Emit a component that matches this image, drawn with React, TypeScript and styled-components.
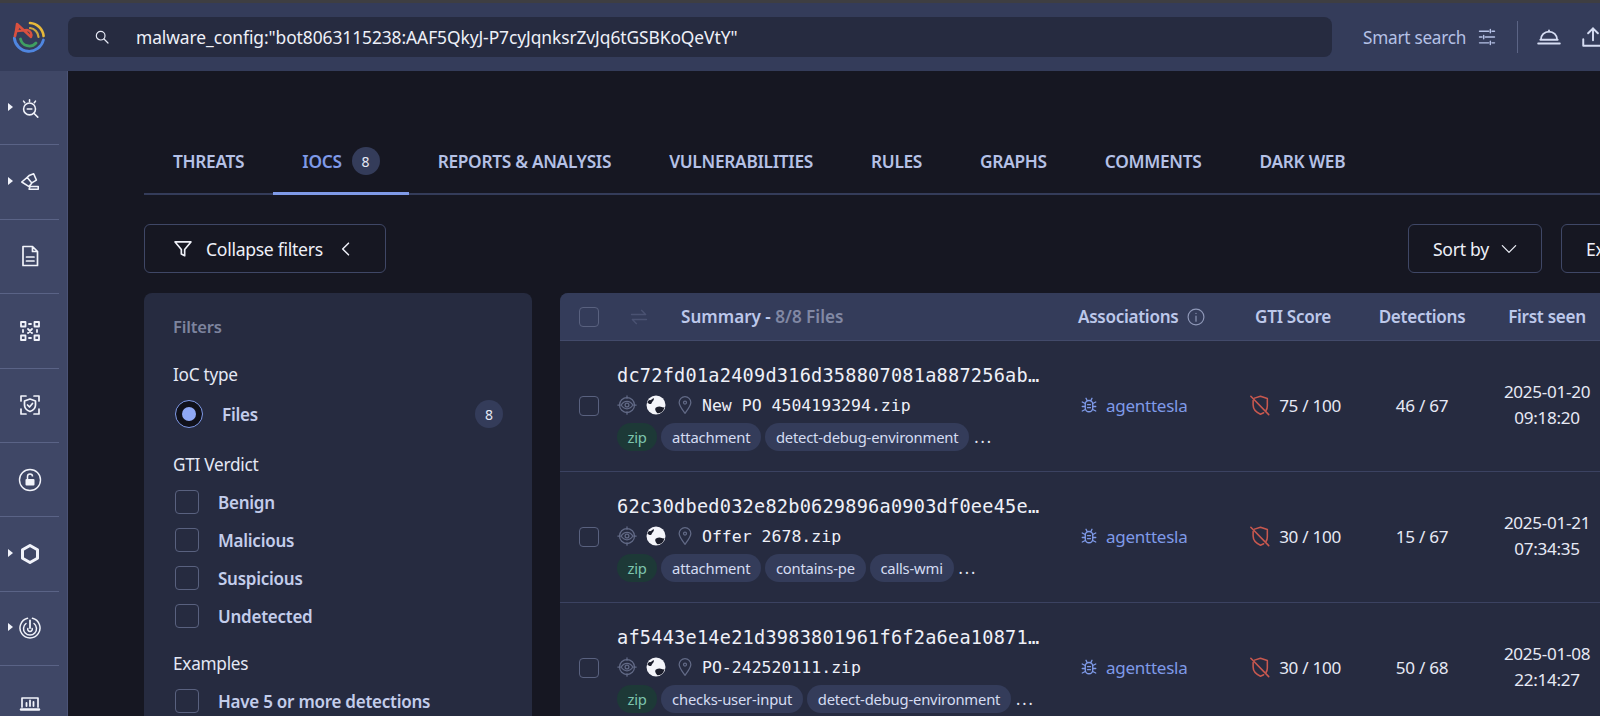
import React from "react";
import styled, { createGlobalStyle } from "styled-components";

const Global = createGlobalStyle`
  html, body { margin: 0; padding: 0; background: #161722; height: 100%; overflow: hidden; }
  #root { height: 100%; }
  * { box-sizing: border-box; }
`;

const SANS = `"Noto Sans", "Open Sans", sans-serif`;
const MONO = `"DejaVu Sans Mono", "Liberation Mono", monospace`;

const Page = styled.div`
  width: 1600px; height: 716px; overflow: hidden; display: flex; flex-direction: column;
  background: #161722; font-family: ${SANS}; color: #e6e9f5;
`;
const TopStrip = styled.div` height: 3px; background: #3e3e42; flex: none; `;
const Header = styled.header`
  height: 68px; flex: none; display: flex; align-items: center; background: #343c5a; overflow: hidden;
`;
const LogoCell = styled.div` width: 68px; flex: none; display: flex; justify-content: center; padding-right: 10px; `;
const SearchBox = styled.div`
  width: 1264px; flex: none; height: 40px; border-radius: 8px; background: #262b40;
  display: flex; align-items: center; padding-left: 26px; gap: 26px;
`;
const SearchText = styled.span` font-size: 17.4px; color: #eef0f8; white-space: nowrap; letter-spacing: -0.08px; `;
const SmartSearch = styled.span`
  margin-left: 31px; font-size: 17.2px; color: #b5c1e6; white-space: nowrap; letter-spacing: -0.25px; flex: none;
`;
const HeaderIcons = styled.div` display: flex; align-items: center; flex: none; margin-left: 11px; gap: 18px; `;
const VRule = styled.div` width: 1px; height: 32px; background: #5b6485; margin-left: 2px; `;

const Body = styled.div` flex: 1; display: flex; min-height: 0; `;
const Sidebar = styled.nav`
  width: 68px; flex: none; background: #3f4766; border-right: 1px solid #4b5376;
  display: flex; flex-direction: column; overflow: hidden;
`;
const SideRow = styled.div<{ $last?: boolean }>`
  height: 74.4px; flex: none; width: 59px; display: flex; align-items: center; justify-content: center;
  position: relative;
  border-bottom: ${(p) => (p.$last ? "none" : "1px solid #5a6386")};
`;
const SideCaret = styled.span`
  position: absolute; left: 8px; top: 50%; margin-top: -5px; width: 0; height: 0;
  border-left: 5px solid #f1f3fa; border-top: 4.5px solid transparent; border-bottom: 4.5px solid transparent;
`;

const Main = styled.main` flex: 1; min-width: 0; overflow: hidden; padding: 74px 0 0 76px; `;
const Content = styled.div` width: 1547px; `;

const Tabs = styled.div`
  display: flex; height: 50px; border-bottom: 2px solid #343c5a;
`;
const Tab = styled.div<{ $active?: boolean }>`
  height: 50px; padding: 0 29px 15px; display: flex; align-items: center; gap: 10px; flex: none;
  font-size: 17.3px; font-weight: 600; letter-spacing: -0.3px;
  color: ${(p) => (p.$active ? "#7f9ae8" : "#b5c1e6")};
  border-bottom: ${(p) => (p.$active ? "3px solid #7f9ae8" : "3px solid transparent")};
`;
const Count = styled.span`
  width: 28px; height: 28px; border-radius: 50%; background: #343c5a; color: #e6e9f5;
  display: inline-flex; align-items: center; justify-content: center; font-size: 14px; font-weight: 400; letter-spacing: 0;
`;

const Toolbar = styled.div`
  margin-top: 29px; display: flex; align-items: center; gap: 19px;
`;
const OutlineButton = styled.div<{ $push?: boolean }>`
  height: 49px; border: 1px solid #3f4766; border-radius: 6px; display: flex; align-items: center; flex: none;
  padding: 0 24px; font-size: 17.6px; color: #eef0f8; letter-spacing: -0.3px; white-space: nowrap;
  margin-left: ${(p) => (p.$push ? "auto" : "0")};
`;
const CollapseButton = styled(OutlineButton)` width: 242px; padding: 0 0 0 28px; gap: 13px; `;
const SortButton = styled(OutlineButton)` width: 134px; gap: 10px; `;
const ExportButton = styled(OutlineButton)` width: 130px; `;

const Columns = styled.div` margin-top: 20px; display: flex; gap: 28px; align-items: flex-start; `;
const FilterPanel = styled.aside`
  width: 388px; flex: none; height: 500px; background: #262b40; border-radius: 8px 8px 0 0; padding: 22px 29px 0 29px;
`;
const PanelTitle = styled.div` font-size: 16.6px; font-weight: 600; color: #7d849e; line-height: 24px; letter-spacing: -0.2px; `;
const GroupTitle = styled.div<{ $top: number }>`
  font-size: 17.2px; color: #e4e8f5; line-height: 24px; margin-top: ${(p) => p.$top}px; letter-spacing: -0.25px;
`;
const RadioRow = styled.div`
  display: flex; align-items: center; height: 28px; margin-top: 13px; padding-left: 2px;
`;
const Radio = styled.span`
  width: 28px; height: 28px; border-radius: 50%; border: 1px solid #7f9ae8; background: #10111b; flex: none;
  display: flex; align-items: center; justify-content: center;
  &::after { content: ""; width: 14px; height: 14px; border-radius: 50%; background: #8fa8f5; }
`;
const RowLabel = styled.span<{ $gap: number }>`
  margin-left: ${(p) => p.$gap}px; font-size: 17px; font-weight: 600; color: #c3cdeb; letter-spacing: -0.25px; white-space: nowrap;
`;
const PanelCount = styled(Count)` margin-left: auto; font-size: 14px; `;
const CheckRow = styled.div<{ $top: number }>`
  display: flex; align-items: center; height: 24px; margin-top: ${(p) => p.$top}px; padding-left: 2px;
`;
const Check = styled.span<{ $size?: number }>`
  width: ${(p) => p.$size ?? 24}px; height: ${(p) => p.$size ?? 24}px; flex: none;
  border: 1px solid #59617f; border-radius: 4px;
`;

const Table = styled.section` flex: 1; min-width: 0; background: #262b40; border-radius: 8px 8px 0 0; `;
const GRID = "58px 460px 154px 122px 136px 114px 1fr";
const THead = styled.div`
  height: 48px; display: grid; grid-template-columns: ${GRID}; align-items: center; background: #343c5a;
  border-radius: 8px 8px 0 0; border-bottom: 1px solid #424a6a;
  font-size: 17.1px; font-weight: 600; color: #bdc8ea; letter-spacing: -0.3px;
`;
const CheckCell = styled.div` display: flex; justify-content: flex-start; padding-left: 19px; `;
const SummaryHead = styled.div` display: flex; align-items: center; padding-left: 11px; `;
const Dim = styled.span` color: #8188a4; `;
const HeadSummaryText = styled.span` margin-left: 32px; white-space: nowrap; letter-spacing: 0; `;
const Center = styled.div` white-space: nowrap; display: flex; justify-content: center; align-items: center; `;
const AssocHead = styled.div` display: flex; align-items: center; gap: 8px; white-space: nowrap; `;

const Row = styled.div`
  height: 131px; display: grid; grid-template-columns: ${GRID}; align-items: center;
  border-bottom: 1px solid #3b4261;
`;
const Summary = styled.div` display: flex; flex-direction: column; padding-top: 2px; margin-left: -1px; `;
const Hash = styled.div` font-family: ${MONO}; font-size: 18.6px; line-height: 26px; color: #eef0f8; white-space: nowrap; letter-spacing: 0.22px; `;
const NameLine = styled.div` display: flex; align-items: center; height: 26px; margin-top: 3px; `;
const FileName = styled.span` font-family: ${MONO}; font-size: 16.5px; color: #eef0f8; white-space: nowrap; margin-left: 7px; `;
const TagLine = styled.div` display: flex; align-items: center; gap: 4px; margin-top: 5px; `;
const Tag = styled.span<{ $green?: boolean }>`
  height: 28px; padding: 0 ${(p) => (p.$green ? 10.5 : 10.8)}px; border-radius: 14px; display: inline-flex; align-items: center; white-space: nowrap;
  font-size: 14.8px; letter-spacing: -0.2px;
  background: ${(p) => (p.$green ? "#1d3937" : "#343c5a")};
  color: ${(p) => (p.$green ? "#7cc4ad" : "#d5dcf2")};
`;
const More = styled.span` font-size: 16px; margin-left: 1px; letter-spacing: 2px; color: #e6e9f5; `;
const Assoc = styled.div`
  display: flex; align-items: center; gap: 8px; color: #7f9ae8; font-size: 17px; letter-spacing: -0.25px; padding: 0 0 2px 2px; white-space: nowrap;
`;
const Cell = styled.div` font-size: 17.1px; color: #e6e9f5; letter-spacing: -0.3px; white-space: nowrap; text-align: center; padding-bottom: 2px; `;
const ScoreCell = styled(Cell)` display: flex; align-items: center; justify-content: center; gap: 8px; padding-left: 4px; `;
const DateCell = styled(Cell)` line-height: 26px; `;

type IP = { size?: number; color?: string; sw?: number };
const Svg: React.FC<React.PropsWithChildren<IP>> = ({ size = 24, color = "#f1f3fa", sw = 1.7, children }) => (
  <svg width={size} height={size} viewBox="0 0 24 24" fill="none" stroke={color} strokeWidth={sw} strokeLinecap="round" strokeLinejoin="round" style={{ flex: "none" }}>
    {children}
  </svg>
);

const Logo = () => (
  <svg width="36" height="36" viewBox="0 0 36 36" fill="none" strokeLinecap="round">
    <path d="M19 4 A14.5 14.5 0 0 1 32.6 17" stroke="#e8b93a" strokeWidth="2.6" />
    <path d="M19 9 A9.5 9.5 0 0 1 27.5 18" stroke="#e8b93a" strokeWidth="2.2" opacity=".85" />
    <path d="M3.3 19 A14.8 14.8 0 0 0 32.4 21" stroke="#4f86e0" strokeWidth="2.8" />
    <path d="M9.5 20 A9 9 0 0 0 25 24" stroke="#3f9f62" strokeWidth="2.8" />
    <path d="M4 17 A14.5 14.5 0 0 1 7 9" stroke="#d9503f" strokeWidth="2.8" />
    <path d="M6 5 L20 18 M6 5 L5 12 M6 12 L16 11 A5 5 0 0 1 20 18" stroke="#d9503f" strokeWidth="2.4" />
  </svg>
);
const SearchIcon = () => (
  <Svg size={16} color="#e6e9f5" sw={1.8}><circle cx="10" cy="10" r="6.5" /><path d="M15 15l6 6" /></Svg>
);
const SlidersIcon = () => (
  <Svg size={20} color="#b5c1e6" sw={1.7}><path d="M3 5h11M18 5h3M16 3v4M3 12h3M10 12h11M8 10v4M3 19h11M18 19h3M16 17v4" /></Svg>
);
const BellIcon = () => (
  <Svg size={26} color="#d5dcf2" sw={1.7}><path d="M2 18h20M4 14.500h16M4.500 14.500a7.500 7.500 0 0 1 15 0" /><path d="M12 7V6" /></Svg>
);
const UploadIcon = () => (
  <Svg size={26} color="#d5dcf2" sw={1.8}><path d="M12 15V4M7.5 8.5 12 4l4.5 4.5M3 14v6h18v-6" /></Svg>
);
const FunnelIcon = () => (
  <Svg size={20} color="#eef0f8" sw={2}><path d="M2.500 3.500h19l-7.500 9V20l-4-2v-5.500z" /></Svg>
);
const ChevronLeft = () => <Svg size={20} color="#eef0f8" sw={1.8}><path d="M15 5l-7 7 7 7" /></Svg>;
const ChevronDown = () => <Svg size={20} color="#eef0f8" sw={1.5}><path d="M4 8l8 8 8-8" /></Svg>;

const Swap = () => (
  <Svg size={20} color="#4a5272" sw={1.6}><path d="M3 9h17l-5-5M21 15H4l5 5" /></Svg>
);
const InfoIcon = () => (
  <Svg size={20} color="#8f98b8" sw={1.4}><circle cx="12" cy="12" r="9.5" /><path d="M12 11v6M12 7.5v.2" /></Svg>
);
const EyeIcon = () => (
  <Svg size={20} color="#626a86" sw={1.5}>
    <circle cx="12" cy="12" r="9" /><path d="M12 1v3M12 20v3M1 12h3M20 12h3" />
    <path d="M5 12c2-3.5 4.500-4.500 7-4.500s5 1 7 4.500c-2 3.500-4.500 4.500-7 4.500S7 15.500 5 12z" fill="#262b40" /><circle cx="12" cy="12" r="2.300" />
  </Svg>
);
const GlobeIcon = () => (
  <svg width="20" height="20" viewBox="0 0 20 20" style={{ flex: "none", marginLeft: 9 }}>
    <circle cx="10" cy="10" r="9.500" fill="#f4f5fa" />
    <path d="M3 5c1.500.5 3-.5 4.500-2 .8 1 .3 2-.5 3-1.200 1-1 2.300-2.200 3C3.500 9.500 2.300 8 1.500 8 1.600 6.800 2.200 5.800 3 5z" fill="#1b1d2b" />
    <path d="M10 12.500c1.800-1 4-1.500 5.800-.5 1.300.8 2 .4 2.700 0-.5 2.700-1.800 4.500-3.600 5.600-1.800.9-3.300 1-4 .2-1.200-1.800-2.600-3.700-.9-5.300z" fill="#1b1d2b" />
  </svg>
);
const PinIcon = () => (
  <span style={{ marginLeft: 9, display: "inline-flex" }}>
    <Svg size={20} color="#626a86" sw={1.5}><path d="M12 22c-4-5.500-7-9-7-13a7 7 0 0 1 14 0c0 4-3 7.500-7 13z" /><circle cx="12" cy="9" r="1.800" /></Svg>
  </span>
);
const BugIcon = () => (
  <Svg size={18} color="#7f9ae8" sw={1.8}>
    <rect x="7" y="6" width="10" height="15" rx="5" /><path d="M8 3l1.500 3M16 3l-1.500 3M3 8l4 2M21 8l-4 2M3 14h4M21 14h-4M3 20l4-2M21 20l-4-2M10 11.500h4M10 15.500h4" />
  </Svg>
);
const ShieldOff = () => (
  <Svg size={22} color="#c8584f" sw={1.7}>
    <path d="M6 4.500 12.500 2.500 20 5v8c0 2-.5 3.500-1.500 5M16 20.500 12.500 22C8 20 4.500 17 4.500 12V7" /><path d="M2 2.500 21.500 22.500" />
  </Svg>
);

const S1 = () => <Svg size={22}><circle cx="11.500" cy="13" r="6.500" /><path d="M9 13h5M16.500 18l4 4M11.500 3v2M5 4.500l1.300 1.700M18 4.500l-1.300 1.700" /></Svg>;
const S2 = () => <Svg size={22}><path d="M3 12l6-5 5 6-3 4zM9 7l2-2 5-2 3 7-5 3M12 17h9v3H11z" /></Svg>;
const S3 = () => <Svg><path d="M5 2.500h9.500L19.500 7.500V21.500H5zM14.500 2.500V7.500H19.500M8.500 13h7.500M8.500 17h7.500" /></Svg>;
const S4 = () => (
  <Svg sw={1.8}>
    <rect x="3" y="3" width="4.500" height="4.500" /><rect x="16.500" y="3" width="4.500" height="4.500" />
    <rect x="3" y="16.500" width="4.500" height="4.500" /><rect x="16.500" y="16.500" width="4.500" height="4.500" />
    <path d="M10 10l4 4M14 10l-4 4M11 5h2M11 19h2M5 11v2M19 11v2" />
  </Svg>
);
const S5 = () => (
  <Svg><path d="M3 8V3h5M16 3h5v5M3 16v5h5M16 21h5v-5" /><path d="M12 6l5.500 2v4c0 3.500-2.500 5.500-5.500 6.500-3-1-5.500-3-5.500-6.500V8z" /><path d="M9.500 12l2 2 3-3.500" /></Svg>
);
const S6 = () => (
  <svg width="24" height="24" viewBox="0 0 24 24" style={{ flex: "none" }}>
    <circle cx="12" cy="12" r="10.500" fill="none" stroke="#f1f3fa" strokeWidth="1.400" />
    <rect x="7.500" y="11" width="9" height="6.500" rx="1" fill="#f1f3fa" />
    <path d="M9.500 11V8.500a2.500 2.500 0 0 1 5 0" fill="none" stroke="#f1f3fa" strokeWidth="1.500" />
  </svg>
);
const S7 = () => <Svg sw={3}><path d="M12 3.500l7.500 4.300v8.400L12 20.500l-7.500-4.300V7.800z" /></Svg>;
const S8 = () => (
  <Svg sw={1.5}><path d="M14.500 2.300A10 10 0 1 1 9.500 2.300" /><path d="M8 7.500A6.500 6.500 0 1 0 16 7.500" /><path d="M12 4.500V12" strokeWidth="1.800" /><path d="M9.800 12.500a2.300 2.300 0 1 0 4.400 0" /></Svg>
);
const S9 = () => (
  <Svg><path d="M4 16V7h16v9" /><path d="M3 18.500h18" strokeWidth="2.400" /><path d="M8.500 15v-3M12 15V9.500M15.500 15v-4" strokeWidth="1.800" /></Svg>
);

const sideItems: { icon: React.ReactNode; caret?: boolean }[] = [
  { icon: <S1 />, caret: true }, { icon: <S2 />, caret: true }, { icon: <S3 /> }, { icon: <S4 /> },
  { icon: <S5 /> }, { icon: <S6 /> }, { icon: <S7 />, caret: true }, { icon: <S8 />, caret: true }, { icon: <S9 /> },
];

const rows = [
  { hash: "dc72fd01a2409d316d358807081a887256ab…", name: "New PO 4504193294.zip", tags: ["attachment", "detect-debug-environment"], score: "75 / 100", det: "46 / 67", d: "2025-01-20", t: "09:18:20" },
  { hash: "62c30dbed032e82b0629896a0903df0ee45e…", name: "Offer 2678.zip", tags: ["attachment", "contains-pe", "calls-wmi"], score: "30 / 100", det: "15 / 67", d: "2025-01-21", t: "07:34:35" },
  { hash: "af5443e14e21d3983801961f6f2a6ea10871…", name: "PO-242520111.zip", tags: ["checks-user-input", "detect-debug-environment"], score: "30 / 100", det: "50 / 68", d: "2025-01-08", t: "22:14:27" },
];

const tabs = ["THREATS", "IOCS", "REPORTS & ANALYSIS", "VULNERABILITIES", "RULES", "GRAPHS", "COMMENTS", "DARK WEB"];

export default function App() {
  return (
    <Page>
      <Global />
      <TopStrip />
      <Header>
        <LogoCell><Logo /></LogoCell>
        <SearchBox>
          <SearchIcon />
          <SearchText>malware_config:"bot8063115238:AAF5QkyJ-P7cyJqnksrZvJq6tGSBKoQeVtY"</SearchText>
        </SearchBox>
        <SmartSearch>Smart search</SmartSearch>
        <HeaderIcons>
          <SlidersIcon />
          <VRule />
          <BellIcon />
          <UploadIcon />
        </HeaderIcons>
      </Header>
      <Body>
        <Sidebar>
          {sideItems.map((s, i) => (
            <SideRow key={i} $last={i === sideItems.length - 1}>
              {s.caret && <SideCaret />}
              {s.icon}
            </SideRow>
          ))}
        </Sidebar>
        <Main>
          <Content>
            <Tabs>
              {tabs.map((t) => (
                <Tab key={t} $active={t === "IOCS"}>
                  {t}
                  {t === "IOCS" && <Count>8</Count>}
                </Tab>
              ))}
            </Tabs>
            <Toolbar>
              <CollapseButton><FunnelIcon /><span>Collapse filters</span><ChevronLeft /></CollapseButton>
              <SortButton $push>Sort by <ChevronDown /></SortButton>
              <ExportButton>Export</ExportButton>
            </Toolbar>
            <Columns>
              <FilterPanel>
                <PanelTitle>Filters</PanelTitle>
                <GroupTitle $top={24}>IoC type</GroupTitle>
                <RadioRow><Radio /><RowLabel $gap={19}>Files</RowLabel><PanelCount>8</PanelCount></RadioRow>
                <GroupTitle $top={25}>GTI Verdict</GroupTitle>
                <CheckRow $top={13}><Check /><RowLabel $gap={19}>Benign</RowLabel></CheckRow>
                <CheckRow $top={14}><Check /><RowLabel $gap={19}>Malicious</RowLabel></CheckRow>
                <CheckRow $top={14}><Check /><RowLabel $gap={19}>Suspicious</RowLabel></CheckRow>
                <CheckRow $top={14}><Check /><RowLabel $gap={19}>Undetected</RowLabel></CheckRow>
                <GroupTitle $top={24}>Examples</GroupTitle>
                <CheckRow $top={13}><Check /><RowLabel $gap={19}>Have 5 or more detections</RowLabel></CheckRow>
              </FilterPanel>
              <Table>
                <THead>
                  <CheckCell><Check $size={20} /></CheckCell>
                  <SummaryHead>
                    <Swap />
                    <HeadSummaryText>Summary - <Dim>8/8 Files</Dim></HeadSummaryText>
                  </SummaryHead>
                  <AssocHead>Associations <InfoIcon /></AssocHead>
                  <Center>GTI Score</Center>
                  <Center>Detections</Center>
                  <Center>First seen</Center>
                  <div />
                </THead>
                {rows.map((r) => (
                  <Row key={r.hash}>
                    <CheckCell><Check $size={20} /></CheckCell>
                    <Summary>
                      <Hash>{r.hash}</Hash>
                      <NameLine><EyeIcon /><GlobeIcon /><PinIcon /><FileName>{r.name}</FileName></NameLine>
                      <TagLine>
                        <Tag $green>zip</Tag>
                        {r.tags.map((t) => <Tag key={t}>{t}</Tag>)}
                        <More>...</More>
                      </TagLine>
                    </Summary>
                    <Assoc><BugIcon />agenttesla</Assoc>
                    <ScoreCell><ShieldOff />{r.score}</ScoreCell>
                    <Cell>{r.det}</Cell>
                    <DateCell>{r.d}<br />{r.t}</DateCell>
                    <div />
                  </Row>
                ))}
              </Table>
            </Columns>
          </Content>
        </Main>
      </Body>
    </Page>
  );
}
